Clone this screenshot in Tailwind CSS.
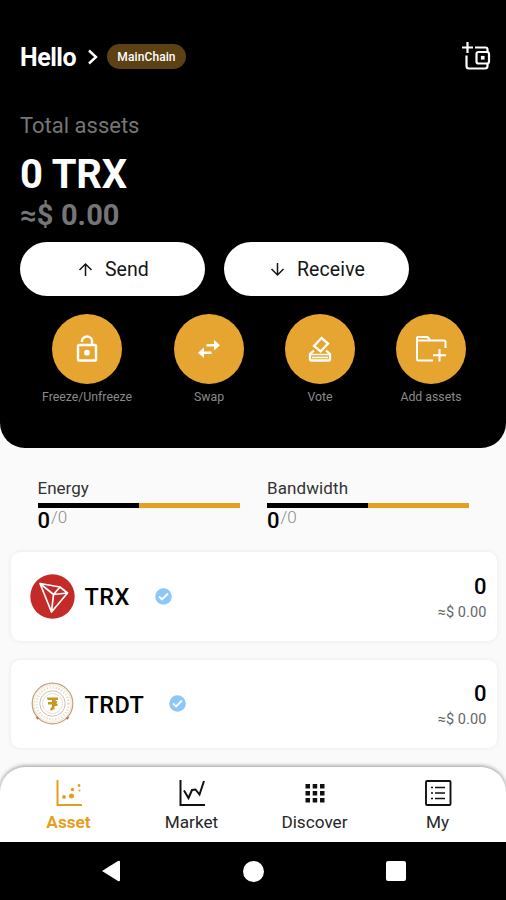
<!DOCTYPE html>
<html lang="en">
<head>
<meta charset="utf-8">
<meta name="viewport" content="width=device-width, initial-scale=1">
<title>Wallet</title>
<script src="https://cdn.jsdelivr.net/npm/@tailwindcss/browser@4"></script>
</head>
<body class="bg-[#fafafa] font-[Roboto,sans-serif] text-black">
<div class="flex h-[900px] w-[506px] flex-col overflow-hidden bg-[#fafafa] leading-none whitespace-nowrap">

  <header class="flex h-[448px] flex-col rounded-b-[25px] bg-black px-[20px] pt-[43px] text-white">
    <div class="flex h-[27px] items-center">
      <h1 class="w-[57px] pt-[3px] text-[25px] leading-[28px] font-bold tracking-[-0.5px]">Hello</h1>
      <svg class="ml-[10px]" width="12" height="16" viewBox="0 0 12 16" fill="none" stroke="#fff" stroke-width="2.4"><path d="M2 1.500 9 8 2 14.500"/></svg>
      <span class="ml-[8px] flex h-[25px] w-[79px] items-center justify-center rounded-full bg-[#5b4114] text-[12px] font-medium tracking-[0.1px]">MainChain</span>
      <svg class="mr-[-5px] ml-auto" width="30" height="30" viewBox="0 0 30 30" fill="none" stroke="#fff" stroke-width="2.2"><path d="M6.500 0v11M1 5.500h11M14 5.500h10.500q2 0 2 2V10M5.500 13.500v10.500q0 2.500 2.500 2.500h16q2.500 0 2.500-2.500v-2"/><rect x="15.500" y="10" width="12.500" height="11.500" rx="2"/><rect x="20.500" y="14.500" width="2.500" height="2.500" fill="#fff" stroke-width="1.200"/></svg>
    </div>
    <p class="mt-[44px] text-[22px] leading-[23px] text-[#757575]">Total assets</p>
    <p class="mt-[18px] text-[40px] font-bold tracking-[-0.1px]">0 TRX</p>
    <p class="mt-[6px] text-[29px] font-bold tracking-[0.1px] text-[#757575]">≈$ 0.00</p>
    <div class="mt-[12px] flex gap-[19px]">
      <button class="flex h-[54px] w-[185px] items-center rounded-full bg-white pl-[58px] text-[19.500px] text-[#151515]">
        <svg class="mr-[12px]" width="15" height="15" viewBox="0 0 15 15" fill="none" stroke="#151515" stroke-width="1.500"><path d="M7.500 14V2M1.500 8 7.500 2l6 6"/></svg><span class="pt-[2px]">Send</span>
      </button>
      <button class="flex h-[54px] w-[185px] items-center rounded-full bg-white pl-[46px] text-[19.500px] text-[#151515]">
        <svg class="mr-[12px]" width="15" height="15" viewBox="0 0 15 15" fill="none" stroke="#151515" stroke-width="1.500"><path d="M7.500 1v12M1.500 7l6 6 6-6"/></svg><span class="pt-[2px] tracking-[0.1px]">Receive</span>
      </button>
    </div>
    <div class="mt-[18px] flex text-[12.300px] text-[#8a8a8a]">
      <div class="ml-[20px] flex w-[94px] flex-col items-center">
        <span class="flex size-[70px] items-center justify-center rounded-full bg-[#e6a531]"><svg width="22" height="28" viewBox="0 0 22 28" fill="none" stroke="#fff" stroke-width="2.400"><rect x="2" y="10" width="18" height="15.500" rx="1"/><path d="M6 7V6a5 4.500 0 0 1 10 0v4"/><circle cx="11" cy="17.700" r="1.700" fill="#fff"/></svg></span>
        <span class="mt-[7px]">Freeze/Unfreeze</span>
      </div>
      <div class="ml-[40px] flex w-[70px] flex-col items-center">
        <span class="flex size-[70px] items-center justify-center rounded-full bg-[#e6a531]"><svg width="24" height="18" viewBox="0 0 24 18" fill="#fff"><path d="M9.500 4H17V0l6 5.200-6 5.200V6.600H9.500zM14.500 11.400H7V7.600l-6 5.200L7 18v-4h7.500z"/></svg></span>
        <span class="mt-[7px]">Swap</span>
      </div>
      <div class="ml-[41px] flex w-[70px] flex-col items-center">
        <span class="flex size-[70px] items-center justify-center rounded-full bg-[#e6a531]"><svg width="24" height="26" viewBox="0 0 24 26" fill="none" stroke="#fff" stroke-width="2.300"><path d="m13.500 2 6.500 5.500-7.500 8L6 10z"/><path d="M6 14.500 2 18v5q0 1.500 1.500 1.500h17q1.500 0 1.500-1.500v-5l-4-3.500"/><path d="M2 18.500h20M4 21.500h16" stroke-width="1.700"/></svg></span>
        <span class="mt-[7px]">Vote</span>
      </div>
      <div class="ml-[41px] flex w-[70px] flex-col items-center">
        <span class="flex size-[70px] items-center justify-center rounded-full bg-[#e6a531]"><svg width="32" height="28" viewBox="0 0 32 28" fill="none" stroke="#fff" stroke-width="2"><path d="M18 25.500H3.500q-1.500 0-1.500-1.500V3q0-1 1-1h9.500l3 3.500H29q1.500 0 1.500 1.500v6M2.500 5.500h13M24.500 14v12.500M18 20.200h13"/></svg></span>
        <span class="mt-[7px]">Add assets</span>
      </div>
    </div>
  </header>

  <main class="flex h-[318px] flex-col">
    <section class="flex h-[104px] gap-[27.500px] pt-[31px] pl-[37.500px]">
      <div class="w-[202px]">
        <p class="pt-px text-[17px] text-[#333]">Energy</p>
        <div class="mt-[5.500px] flex h-[5px] bg-[#e6a020]"><span class="w-1/2 bg-black"></span></div>
        <p class="mt-[2px] flex items-start"><b class="text-[22px] font-medium">0</b><span class="ml-[1px] text-[17px] leading-[15px] font-light text-[#8a8a8a]">/0</span></p>
      </div>
      <div class="w-[202px]">
        <p class="pt-px text-[17px] tracking-[0.1px] text-[#333]">Bandwidth</p>
        <div class="mt-[5.500px] flex h-[5px] bg-[#e6a020]"><span class="w-1/2 bg-black"></span></div>
        <p class="mt-[2px] flex items-start"><b class="text-[22px] font-medium">0</b><span class="ml-[1px] text-[17px] leading-[15px] font-light text-[#8a8a8a]">/0</span></p>
      </div>
    </section>
    <section class="flex flex-col gap-[19px] pr-[9.500px] pl-[10.500px]">
      <article class="flex h-[88.500px] items-center rounded-[9px] bg-white pr-[10px] pl-[19px] shadow-[0_0_5px_rgba(0,0,0,0.08)]">
        <svg width="45" height="45" viewBox="0 0 45 45" fill="none" stroke="#fff" stroke-width="1.700" stroke-linejoin="round"><circle cx="22.500" cy="22.500" r="22.200" fill="#c42b28" stroke="none"/><path d="m10 9.500 20 3.500L37.500 19 21.500 38zM10 9.500 23.500 20.500 21.500 38M23.500 20.500 30 13M23.500 20.500 37.500 19"/></svg>
        <h2 class="ml-[10px] w-[70px] pt-[3px] text-[23.500px] font-medium tracking-[0.4px]">TRX</h2>
        <svg width="17" height="17" viewBox="0 0 17 17" fill="none"><circle cx="8.500" cy="8.500" r="8.300" fill="#8dc6f9"/><path d="m4 8.500 3 3L13 5.500" stroke="#fff" stroke-width="1.800"/></svg>
        <div class="ml-auto flex flex-col items-end pt-[3px]"><b class="text-[22px] font-medium">0</b><span class="mt-[8px] text-[14.500px] tracking-[0.1px] text-[#666]">≈$ 0.00</span></div>
      </article>
      <article class="flex h-[88.500px] items-center rounded-[9px] bg-white pr-[10px] pl-[19px] shadow-[0_0_5px_rgba(0,0,0,0.08)]">
        <svg width="45" height="45" viewBox="0 0 45 45" fill="none"><circle cx="22.500" cy="22.500" r="20.300" stroke="#c0a37b" stroke-width="1.200"/><circle cx="22.500" cy="22.500" r="18.700" stroke="#e8dcc2" stroke-width=".8"/><circle cx="22.500" cy="22.500" r="16" stroke="#e2dac8" stroke-width="2.400" stroke-dasharray="1.200 1.800"/><circle cx="22.500" cy="22.500" r="12.700" stroke="#cfc0ac" stroke-width="1"/><circle cx="22.500" cy="22.500" r="10" stroke="#e5ddd2" stroke-width="1"/><path d="M16.500 16.500h11.500V19h-3l2.500 2-1.500 1.500h1.500V25h-3v3L20.500 30v-3l1.500-1v-2.500h-4V21h4v-2h-4z" fill="#c8981c"/><path d="m6.500 36 2 2M36.500 38l2-2" stroke="#b97846" stroke-width="2"/></svg>
        <h2 class="ml-[10px] w-[84px] pt-[3px] text-[23.500px] font-medium tracking-[0.4px]">TRDT</h2>
        <svg width="17" height="17" viewBox="0 0 17 17" fill="none"><circle cx="8.500" cy="8.500" r="8.300" fill="#8dc6f9"/><path d="m4 8.500 3 3L13 5.500" stroke="#fff" stroke-width="1.800"/></svg>
        <div class="ml-auto flex flex-col items-end pt-[2px]"><b class="text-[22px] font-medium">0</b><span class="mt-[8px] text-[14.500px] tracking-[0.1px] text-[#666]">≈$ 0.00</span></div>
      </article>
    </section>
  </main>

  <nav class="mt-[1px] flex h-[75px] rounded-t-[25px] bg-white px-[7px] pt-[11px] text-[17.200px] text-[#262626] shadow-[0_-1px_4px_rgba(0,0,0,0.4)]">
    <a class="flex w-[123px] flex-col items-center font-bold text-[#e59f20]"><svg width="30" height="30" viewBox="0 0 30 30" fill="currentColor"><path d="M3.500 2v25H28" fill="none" stroke="currentColor" stroke-width="2"/><circle cx="10" cy="19" r="1.900"/><circle cx="17.500" cy="18" r="2.500"/><circle cx="18.500" cy="11.500" r="1.700"/><circle cx="25" cy="7.500" r="1.400"/><circle cx="25.500" cy="12.500" r="1"/></svg><span class="mt-[6px]">Asset</span></a>
    <a class="flex w-[123px] flex-col items-center"><svg width="30" height="30" viewBox="0 0 30 30" fill="none" stroke="#111" stroke-width="2"><path d="M3.500 2v25H28"/><path d="m7 12.500 4.500 7.500 3.500-8 3.500-.500 4 5 4.500-13.500"/></svg><span class="mt-[6px]">Market</span></a>
    <a class="flex w-[123px] flex-col items-center"><svg width="30" height="30" viewBox="0 0 30 30" fill="#111"><path d="M5.500 6h4.500v4.500H5.500zM12.700 6h4.500v4.500h-4.500zM20 6h4.500v4.500H20zM5.500 13h4.500v4.500H5.500zM12.700 13h4.500v4.500h-4.500zM20 13h4.500v4.500H20zM5.500 20h4.500v4.500H5.500zM12.700 20h4.500v4.500h-4.500zM20 20h4.500v4.500H20z"/></svg><span class="mt-[6px]">Discover</span></a>
    <a class="flex w-[123px] flex-col items-center"><svg width="30" height="30" viewBox="0 0 30 30" fill="none" stroke="#111" stroke-width="1.900"><rect x="3" y="3" width="24.500" height="24" rx="1"/><path d="M8 9.500h2M12 9.500h10M8 15h2M12 15h10M8 20.500h2M12 20.500h10" stroke-width="1.600"/></svg><span class="mt-[6px]">My</span></a>
  </nav>

  <footer class="flex h-[58px] items-center bg-black pl-[102px] text-white">
    <svg width="18" height="22" viewBox="0 0 18 22" fill="#fff"><path d="M0 11 16 1q2-1 2 1v18q0 2-2 1z"/></svg>
    <span class="ml-[123px] size-[21px] rounded-full bg-white"></span>
    <span class="ml-[122px] size-[20px] rounded-[2px] bg-white"></span>
  </footer>
</div>
</body>
</html>
